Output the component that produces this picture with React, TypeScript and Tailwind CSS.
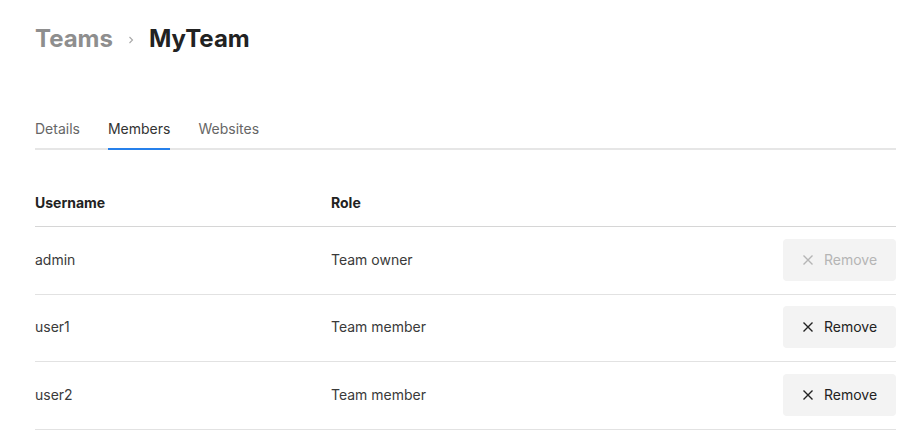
import React from "react";

const members = [
  { name: "admin", role: "Team owner", disabled: true },
  { name: "user1", role: "Team member", disabled: false },
  { name: "user2", role: "Team member", disabled: false },
];

const XIcon = () => (
  <svg width="12" height="12" viewBox="0 0 12 12" fill="none" stroke="currentColor" strokeWidth="1.4">
    <path d="M1.5 1.5 10.5 10.5M10.5 1.5 1.5 10.5" />
  </svg>
);

export default function App() {
  return (
    <div className="w-[920px] h-[435px] bg-white pl-[35px] pr-[24px] pt-[23px] font-['Inter',sans-serif] text-[#333]">
      {/* Breadcrumb title */}
      <div className="flex items-center h-8 text-[24px] font-bold leading-8">
        <span className="text-[#8e8e8e]">Teams</span>
        <svg className="mx-[14px] mt-[1px]" width="8" height="10" viewBox="0 0 8 10" fill="none" stroke="#a8a8a8" strokeWidth="1.1">
          <path d="M2.5 2 5.5 5 2.5 8" />
        </svg>
        <span className="text-[#222]">MyTeam</span>
      </div>

      {/* Tabs */}
      <div className="mt-[64px] flex gap-[28px] border-b-2 border-[#e6e6e6] text-[14px] leading-5">
        <div className="pb-[9px] -mb-[2px] text-[#666]">Details</div>
        <div className="pb-[9px] -mb-[2px] border-b-2 border-[#2680eb] text-[#333]">Members</div>
        <div className="pb-[9px] -mb-[2px] text-[#666]">Websites</div>
      </div>

      {/* Table */}
      <div className="mt-[43px] text-[14px] leading-5">
        <div className="flex pb-[13px] border-b border-[#d6d6d6] font-bold text-[#222]">
          <div className="w-[296px]">Username</div>
          <div>Role</div>
        </div>
        {members.map((m) => (
          <div key={m.name} className="flex items-center h-[67.5px] pb-[1px] border-b border-[#e2e2e2] text-[#3a3a3a]">
            <div className="w-[296px]">{m.name}</div>
            <div className="flex-1">{m.role}</div>
            <button
              className={`flex items-center gap-[10px] h-[42px] w-[113px] justify-center rounded-[4px] bg-[#f3f3f3] ${
                m.disabled ? "text-[#b5b5b5]" : "text-[#222]"
              }`}
            >
              <XIcon />
              <span>Remove</span>
            </button>
          </div>
        ))}
      </div>
    </div>
  );
}
